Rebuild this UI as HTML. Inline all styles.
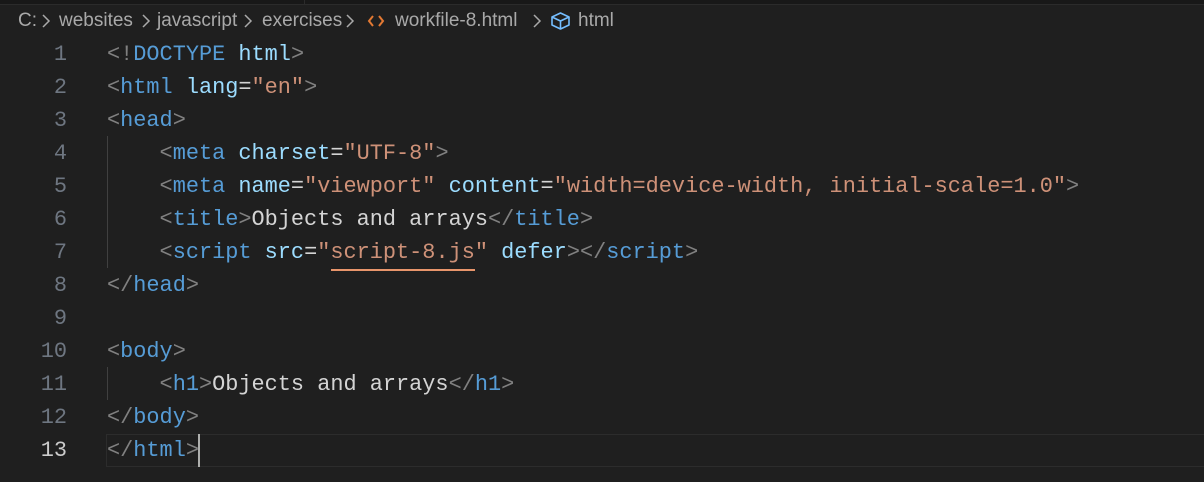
<!DOCTYPE html>
<html><head><meta charset="utf-8"><style>
html,body{margin:0;padding:0;background:#1f1f1f;width:1204px;height:482px;overflow:hidden}
.top{position:absolute;left:0;top:0;width:1204px;height:4px;background:#181818;border-bottom:1px solid #2b2b2b}
.top i{position:absolute;left:304px;top:0;width:1px;height:4px;background:#2b2b2b}
.bc span,.bc svg{position:absolute;top:9px;font:19px "Liberation Sans",sans-serif;color:#a9a9a9;white-space:nowrap;line-height:24px}
.bc svg{top:13px}
.ln{position:absolute;left:0;width:67px;text-align:right;font:21.9px "Liberation Mono",monospace;color:#6e7681;line-height:33px}
.code{position:absolute;left:107px;top:0;font:21.9px "Liberation Mono",monospace;line-height:33px;white-space:pre;color:#d4d4d4}
.p{color:#808080}.t{color:#569cd6}.a{color:#9cdcfe}.s2{color:#ce9178}
.g{position:absolute;left:107px;width:1px;background:#404040}
.cur{position:absolute;left:106px;top:434px;width:1100px;height:31px;border:1px solid #2c2c2c;box-sizing:content-box}
.caret{position:absolute;left:198px;top:434px;width:2px;height:33px;background:#aeafad}
.ul{position:absolute;left:331px;top:269px;width:144px;height:2px;background:#e8956b}
</style></head><body>
<div class="top"><i></i></div>
<div class="bc">
<span style="left:18px">C:</span>
<svg style="left:41px" width="10" height="16" viewBox="0 0 10 16"><path d="M2 2 L8 8 L2 14" stroke="#a9a9a9" stroke-width="1.5" fill="none"/></svg>
<span style="left:59px">websites</span>
<svg style="left:141px" width="10" height="16" viewBox="0 0 10 16"><path d="M2 2 L8 8 L2 14" stroke="#a9a9a9" stroke-width="1.5" fill="none"/></svg>
<span style="left:157px">javascript</span>
<svg style="left:243px" width="10" height="16" viewBox="0 0 10 16"><path d="M2 2 L8 8 L2 14" stroke="#a9a9a9" stroke-width="1.5" fill="none"/></svg>
<span style="left:262px">exercises</span>
<svg style="left:345px" width="10" height="16" viewBox="0 0 10 16"><path d="M2 2 L8 8 L2 14" stroke="#a9a9a9" stroke-width="1.5" fill="none"/></svg>
<svg style="left:367px" width="18" height="16" viewBox="0 0 18 16"><path d="M6 3 L2 8 L6 13 M12 3 L16 8 L12 13" stroke="#e37933" stroke-width="2" fill="none"/></svg>
<span style="left:395px">workfile-8.html</span>
<svg style="left:532px" width="10" height="16" viewBox="0 0 10 16"><path d="M2 2 L8 8 L2 14" stroke="#a9a9a9" stroke-width="1.5" fill="none"/></svg>
<svg style="left:550px;top:11px" width="21" height="20" viewBox="0 0 21 20"><path d="M10.5 2 L19 6 L19 14 L10.5 18 L2 14 L2 6 Z M2 6 L10.5 10 L19 6 M10.5 10 L10.5 18" stroke="#75beff" stroke-width="1.6" fill="none" stroke-linejoin="round"/></svg>
<span style="left:578px">html</span>
</div>
<div class="cur"></div>
<div class="g" style="top:136px;height:132px"></div>
<div class="g" style="top:367px;height:33px"></div>
<div class="ul"></div>
<div class="ln" style="top:38px">1<br>2<br>3<br>4<br>5<br>6<br>7<br>8<br>9<br>10<br>11<br>12<br><span style="color:#cccccc">13</span></div>
<div class="code" style="top:38px"><span class="p">&lt;!</span><span class="t">DOCTYPE</span> <span class="a">html</span><span class="p">&gt;</span>
<span class="p">&lt;</span><span class="t">html</span> <span class="a">lang</span>=<span class="s2">"en"</span><span class="p">&gt;</span>
<span class="p">&lt;</span><span class="t">head</span><span class="p">&gt;</span>
    <span class="p">&lt;</span><span class="t">meta</span> <span class="a">charset</span>=<span class="s2">"UTF-8"</span><span class="p">&gt;</span>
    <span class="p">&lt;</span><span class="t">meta</span> <span class="a">name</span>=<span class="s2">"viewport"</span> <span class="a">content</span>=<span class="s2">"width=device-width, initial-scale=1.0"</span><span class="p">&gt;</span>
    <span class="p">&lt;</span><span class="t">title</span><span class="p">&gt;</span>Objects and arrays<span class="p">&lt;/</span><span class="t">title</span><span class="p">&gt;</span>
    <span class="p">&lt;</span><span class="t">script</span> <span class="a">src</span>=<span class="s2">"script-8.js"</span> <span class="a">defer</span><span class="p">&gt;&lt;/</span><span class="t">script</span><span class="p">&gt;</span>
<span class="p">&lt;/</span><span class="t">head</span><span class="p">&gt;</span>

<span class="p">&lt;</span><span class="t">body</span><span class="p">&gt;</span>
    <span class="p">&lt;</span><span class="t">h1</span><span class="p">&gt;</span>Objects and arrays<span class="p">&lt;/</span><span class="t">h1</span><span class="p">&gt;</span>
<span class="p">&lt;/</span><span class="t">body</span><span class="p">&gt;</span>
<span class="p">&lt;/</span><span class="t">html</span><span class="p">&gt;</span></div>
<div class="caret"></div>
</body></html>
